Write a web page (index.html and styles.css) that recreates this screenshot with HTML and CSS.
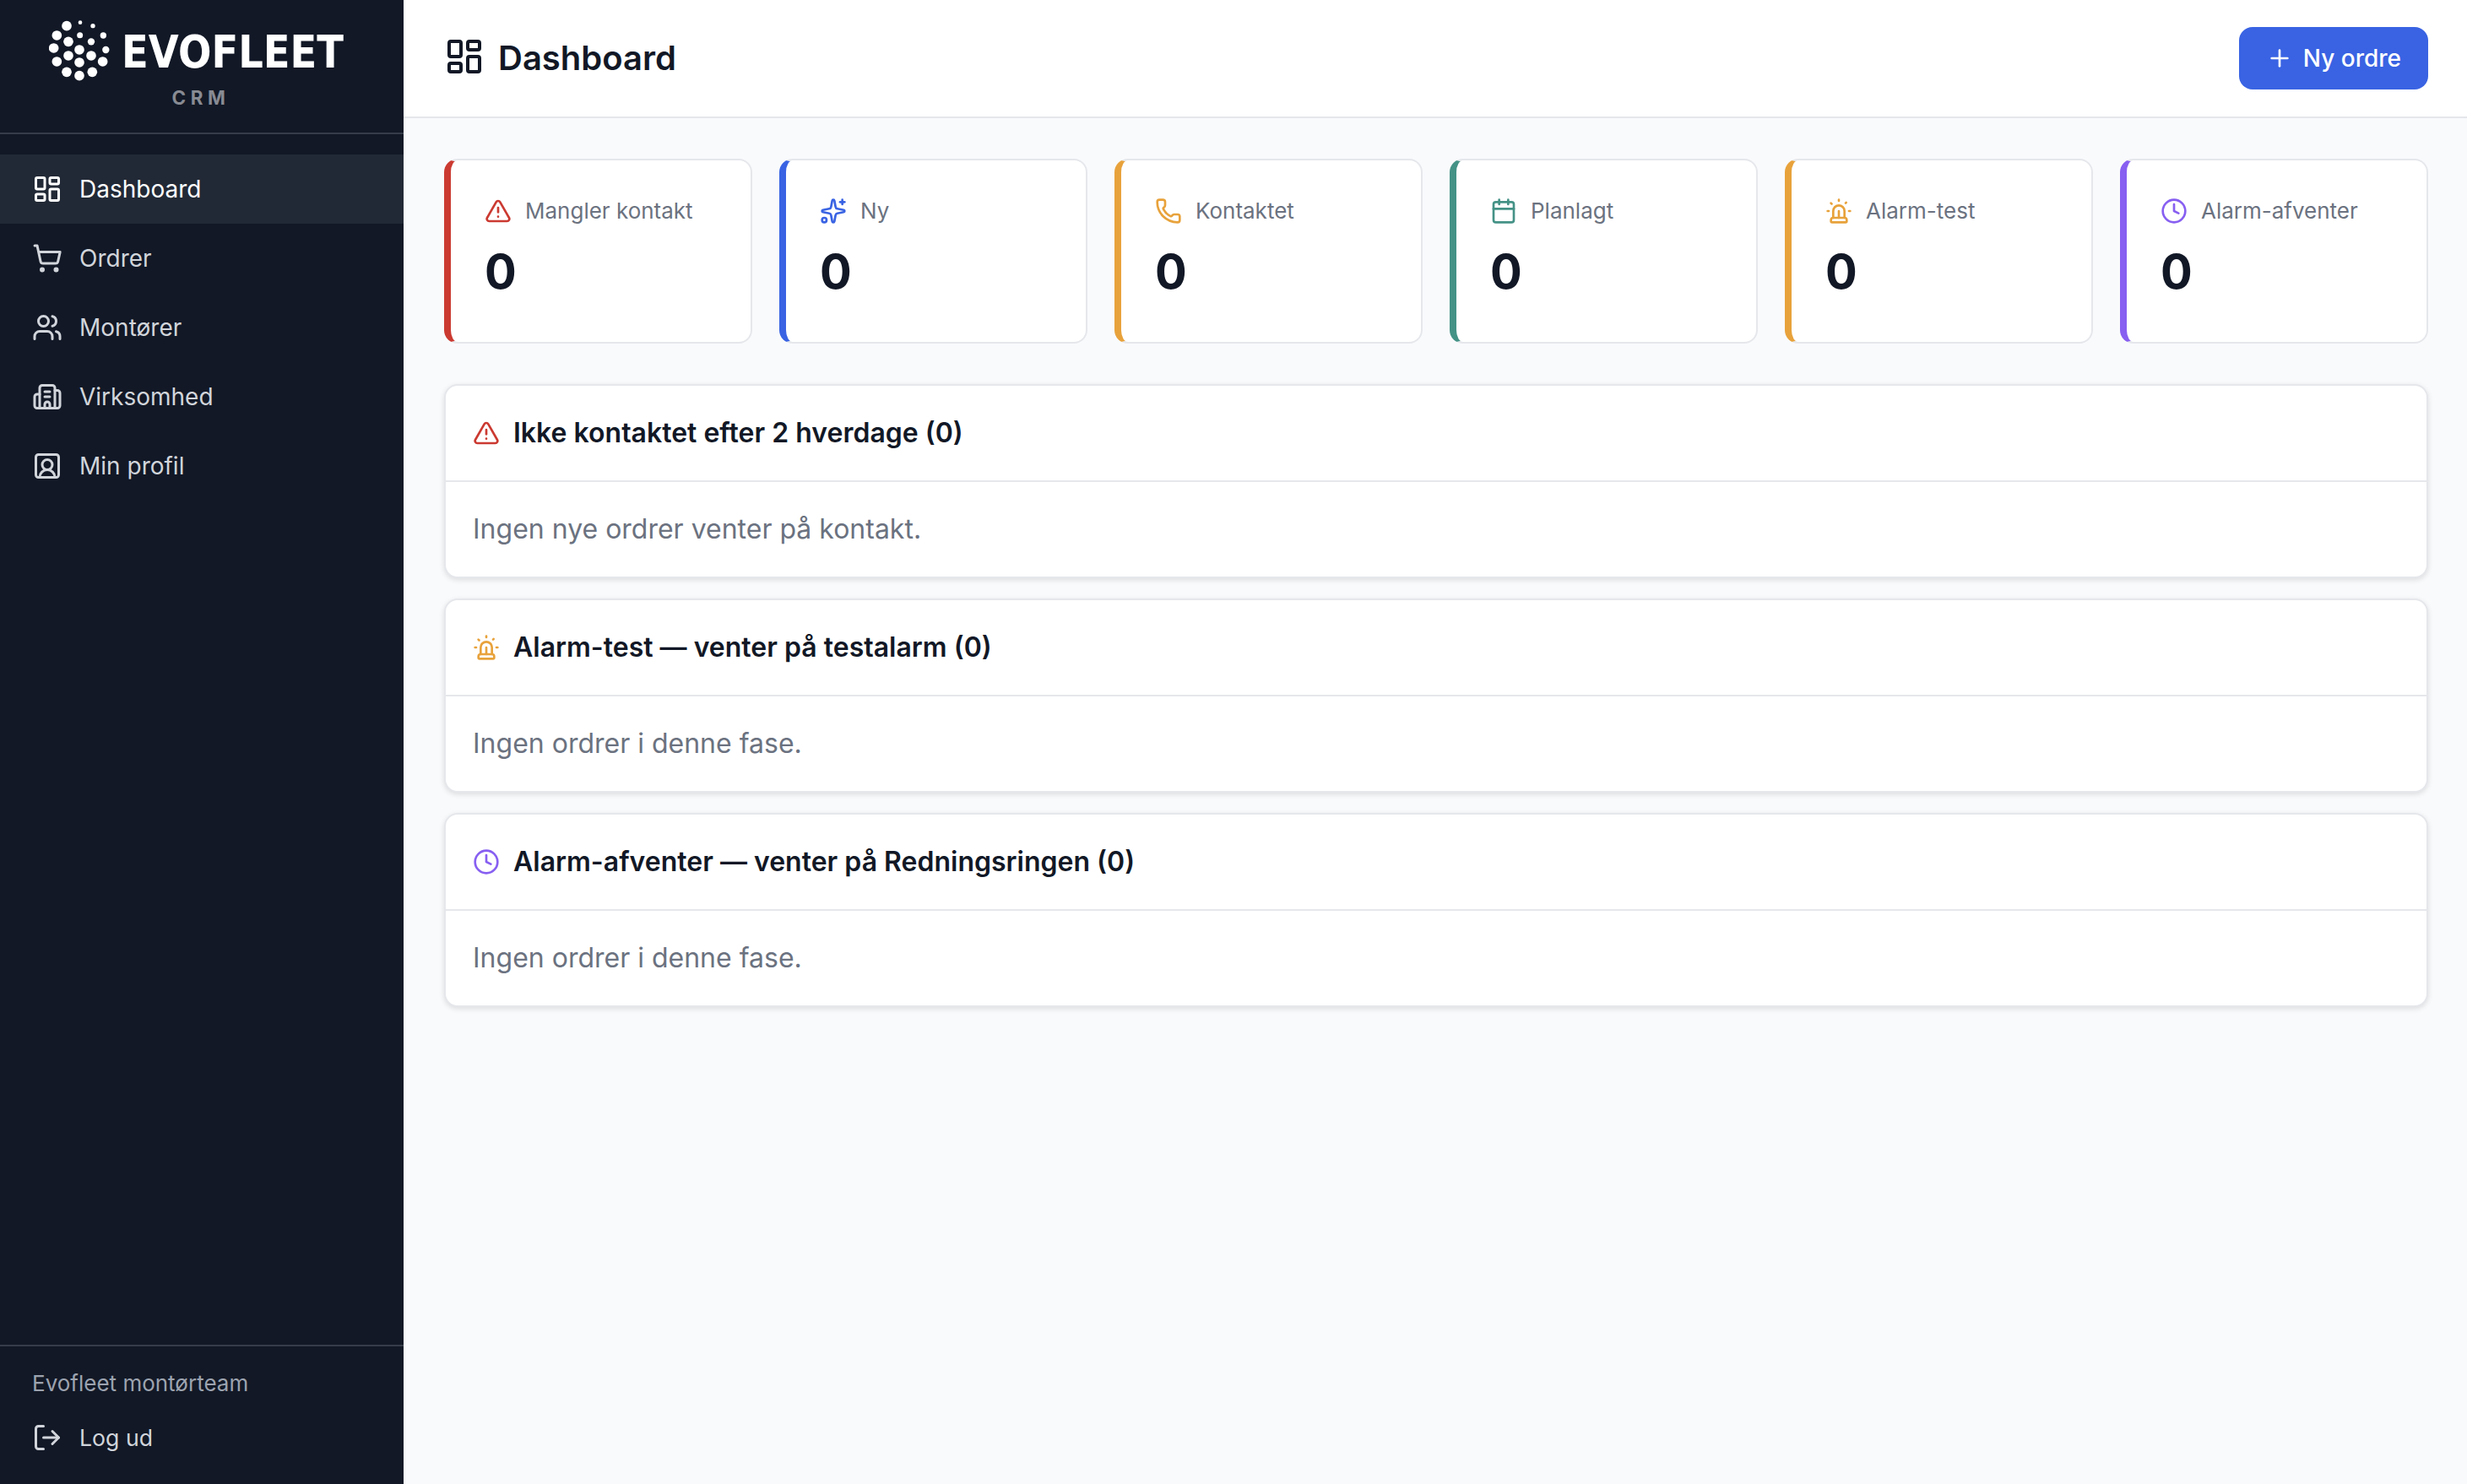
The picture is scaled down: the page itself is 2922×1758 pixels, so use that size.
FILE: index.html
```
<!DOCTYPE html>
<html lang="da">
  <head>
    <meta charset="UTF-8" />
    <meta name="viewport" content="width=device-width, initial-scale=1.0" />
    <title>Dashboard - Evofleet CRM</title>
    <link rel="stylesheet" href="styles.css">
  </head>
  <body>
    <!-- icon sprite -->
    <svg class="sprite" aria-hidden="true">
      <symbol id="i-dashboard" viewBox="0 0 24 24">
        <rect width="7" height="9" x="3" y="3" rx="1" />
        <rect width="7" height="5" x="14" y="3" rx="1" />
        <rect width="7" height="9" x="14" y="12" rx="1" />
        <rect width="7" height="5" x="3" y="16" rx="1" />
      </symbol>
      <symbol id="i-cart" viewBox="0 0 24 24">
        <circle cx="8" cy="21" r="1" />
        <circle cx="19" cy="21" r="1" />
        <path d="M2.05 2.05h2l2.66 12.42a2 2 0 0 0 2 1.58h9.78a2 2 0 0 0 1.95-1.57l1.65-7.43H5.12" />
      </symbol>
      <symbol id="i-users" viewBox="0 0 24 24">
        <path d="M16 21v-2a4 4 0 0 0-4-4H6a4 4 0 0 0-4 4v2" />
        <path d="M16 3.128a4 4 0 0 1 0 7.744" />
        <path d="M22 21v-2a4 4 0 0 0-3-3.87" />
        <circle cx="9" cy="7" r="4" />
      </symbol>
      <symbol id="i-building" viewBox="0 0 24 24">
        <path d="M10 12h4" />
        <path d="M10 8h4" />
        <path d="M14 21v-3a2 2 0 0 0-4 0v3" />
        <path d="M6 10H4a2 2 0 0 0-2 2v7a2 2 0 0 0 2 2h16a2 2 0 0 0 2-2V9a2 2 0 0 0-2-2h-2" />
        <path d="M6 21V5a2 2 0 0 1 2-2h8a2 2 0 0 1 2 2v16" />
      </symbol>
      <symbol id="i-profile" viewBox="0 0 24 24">
        <path d="M18 21a6 6 0 0 0-12 0" />
        <circle cx="12" cy="11" r="4" />
        <rect width="18" height="18" x="3" y="3" rx="2" />
      </symbol>
      <symbol id="i-logout" viewBox="0 0 24 24">
        <path d="m16 17 5-5-5-5" />
        <path d="M21 12H9" />
        <path d="M9 21H5a2 2 0 0 1-2-2V5a2 2 0 0 1 2-2h4" />
      </symbol>
      <symbol id="i-plus" viewBox="0 0 24 24">
        <path d="M5 12h14" />
        <path d="M12 5v14" />
      </symbol>
      <symbol id="i-alert" viewBox="0 0 24 24">
        <path d="m21.73 18-8-14a2 2 0 0 0-3.48 0l-8 14A2 2 0 0 0 4 21h16a2 2 0 0 0 1.73-3" />
        <path d="M12 9v4" />
        <path d="M12 17h.01" />
      </symbol>
      <symbol id="i-sparkles" viewBox="0 0 24 24">
        <path d="M11.017 2.814a1 1 0 0 1 1.966 0l1.051 5.558a2 2 0 0 0 1.594 1.594l5.558 1.051a1 1 0 0 1 0 1.966l-5.558 1.051a2 2 0 0 0-1.594 1.594l-1.051 5.558a1 1 0 0 1-1.966 0l-1.051-5.558a2 2 0 0 0-1.594-1.594l-5.558-1.051a1 1 0 0 1 0-1.966l5.558-1.051a2 2 0 0 0 1.594-1.594z" />
        <path d="M20 2v4" />
        <path d="M22 4h-4" />
        <circle cx="4" cy="20" r="2" />
      </symbol>
      <symbol id="i-phone" viewBox="0 0 24 24">
        <path d="M13.832 16.568a1 1 0 0 0 1.213-.303l.355-.465A2 2 0 0 1 17 15h3a2 2 0 0 1 2 2v3a2 2 0 0 1-2 2A18 18 0 0 1 2 4a2 2 0 0 1 2-2h3a2 2 0 0 1 2 2v3a2 2 0 0 1-.8 1.6l-.468.351a1 1 0 0 0-.292 1.233 14 14 0 0 0 6.392 6.384" />
      </symbol>
      <symbol id="i-calendar" viewBox="0 0 24 24">
        <path d="M8 2v4" />
        <path d="M16 2v4" />
        <rect width="18" height="18" x="3" y="4" rx="2" />
        <path d="M3 10h18" />
      </symbol>
      <symbol id="i-siren" viewBox="0 0 24 24">
        <path d="M7 18v-6a5 5 0 1 1 10 0v6" />
        <path d="M5 21a1 1 0 0 0 1 1h12a1 1 0 0 0 1-1v-1a2 2 0 0 0-2-2H7a2 2 0 0 0-2 2z" />
        <path d="M21 12h1" />
        <path d="M18.5 4.5 18 5" />
        <path d="M2 12h1" />
        <path d="M12 2v1" />
        <path d="m4.929 4.929.707.707" />
        <path d="M12 12v6" />
      </symbol>
      <symbol id="i-clock" viewBox="0 0 24 24">
        <circle cx="12" cy="12" r="10" />
        <path d="M12 6v6l4 2" />
      </symbol>
    </svg>

    <aside class="sidebar">
      <div class="brand">
        <svg class="logo" viewBox="0 -8 360 80" role="img" aria-label="Evofleet">
          <g transform="scale(.3333) translate(-174 -72)">
            <circle cx="237" cy="92" r="17.5" />
            <circle cx="285" cy="80" r="7" />
            <circle cx="330" cy="92" r="8" />
            <circle cx="202" cy="126" r="17.5" />
            <circle cx="284" cy="125.5" r="10.5" />
            <circle cx="367" cy="126" r="11" />
            <circle cx="243" cy="148" r="17.5" />
            <circle cx="324" cy="148" r="12.5" />
            <circle cx="191" cy="171" r="17.5" />
            <circle cx="282" cy="177" r="17.5" />
            <circle cx="376" cy="177" r="12.5" />
            <circle cx="243" cy="198" r="17.5" />
            <circle cx="324" cy="198" r="17.5" />
            <circle cx="202" cy="219" r="17.5" />
            <circle cx="282" cy="222" r="17.5" />
            <circle cx="365" cy="219" r="17.5" />
            <circle cx="237" cy="256" r="17.5" />
            <circle cx="328" cy="256" r="17.5" />
            <circle cx="282" cy="269" r="17.5" />
          </g>
          <text class="logo-text" x="86" y="56" textLength="263" lengthAdjust="spacingAndGlyphs">EVOFLEET</text>
        </svg>
        <span class="brand-sub">CRM</span>
      </div>
      <nav class="nav">
        <a class="nav-item active"><svg class="icon"><use href="#i-dashboard" /></svg>Dashboard</a>
        <a class="nav-item"><svg class="icon"><use href="#i-cart" /></svg>Ordrer</a>
        <a class="nav-item"><svg class="icon"><use href="#i-users" /></svg>Montører</a>
        <a class="nav-item"><svg class="icon"><use href="#i-building" /></svg>Virksomhed</a>
        <a class="nav-item"><svg class="icon"><use href="#i-profile" /></svg>Min profil</a>
      </nav>
      <div class="sidebar-footer">
        <div class="user-name">Evofleet montørteam</div>
        <a class="logout"><svg class="icon"><use href="#i-logout" /></svg>Log ud</a>
      </div>
    </aside>

    <main class="main">
      <header class="topbar">
        <h1><svg class="icon"><use href="#i-dashboard" /></svg>Dashboard</h1>
        <button class="btn"><svg class="icon"><use href="#i-plus" /></svg>Ny ordre</button>
      </header>

      <div class="content">
        <div class="stats">
          <div class="stat red">
            <div class="stat-label"><svg class="icon"><use href="#i-alert" /></svg>Mangler kontakt</div>
            <div class="stat-value">0</div>
          </div>
          <div class="stat blue">
            <div class="stat-label"><svg class="icon"><use href="#i-sparkles" /></svg>Ny</div>
            <div class="stat-value">0</div>
          </div>
          <div class="stat orange">
            <div class="stat-label"><svg class="icon"><use href="#i-phone" /></svg>Kontaktet</div>
            <div class="stat-value">0</div>
          </div>
          <div class="stat green">
            <div class="stat-label"><svg class="icon"><use href="#i-calendar" /></svg>Planlagt</div>
            <div class="stat-value">0</div>
          </div>
          <div class="stat orange">
            <div class="stat-label"><svg class="icon"><use href="#i-siren" /></svg>Alarm-test</div>
            <div class="stat-value">0</div>
          </div>
          <div class="stat purple">
            <div class="stat-label"><svg class="icon"><use href="#i-clock" /></svg>Alarm-afventer</div>
            <div class="stat-value">0</div>
          </div>
        </div>

        <div class="cards">
          <section class="card red">
            <h2><svg class="icon"><use href="#i-alert" /></svg>Ikke kontaktet efter 2 hverdage (0)</h2>
            <p>Ingen nye ordrer venter på kontakt.</p>
          </section>
          <section class="card orange">
            <h2><svg class="icon"><use href="#i-siren" /></svg>Alarm-test — venter på testalarm (0)</h2>
            <p>Ingen ordrer i denne fase.</p>
          </section>
          <section class="card purple">
            <h2><svg class="icon"><use href="#i-clock" /></svg>Alarm-afventer — venter på Redningsringen (0)</h2>
            <p>Ingen ordrer i denne fase.</p>
          </section>
        </div>
      </div>
    </main>
  </body>
</html>
```
FILE: styles.css
```
* {
  box-sizing: border-box;
  margin: 0;
  padding: 0;
}

html {
  font-size: 32px;
}

body {
  display: flex;
  height: 100vh;
  overflow: hidden;
  background: #f9fafc;
  color: #121826;
  font-family: "Inter", "Liberation Sans", sans-serif;
  line-height: 1.5;
}

.sprite {
  display: none;
}

.icon {
  width: 32px;
  height: 32px;
  flex-shrink: 0;
  fill: none;
  stroke: currentColor;
  stroke-width: 2;
  stroke-linecap: round;
  stroke-linejoin: round;
}

/* accent colours */
.red { --accent: #cb3a31; }
.blue { --accent: #3963e3; }
.orange { --accent: #e8a23b; }
.green { --accent: #449286; }
.purple { --accent: #875ff1; }

/* sidebar */
.sidebar {
  display: flex;
  flex-direction: column;
  flex-shrink: 0;
  width: 478px;
  background: #121826;
  color: #d1d5db;
}

.brand {
  display: flex;
  flex-direction: column;
  height: 159px;
  padding: 16px 0 0 58px;
  border-bottom: 2px solid #363c49;
}

.logo {
  width: 360px;
  height: 80px;
  fill: #fff;
}

.logo-text {
  font-family: "DejaVu Sans", sans-serif;
  font-size: 54px;
  font-weight: 700;
}

.brand-sub {
  width: 360px;
  margin-top: 3px;
  color: #888b93;
  font-size: 0.7rem;
  font-weight: 700;
  letter-spacing: 0.25em;
  text-align: center;
}

.nav {
  flex: 1;
  padding-top: 24px;
}

.nav-item {
  display: flex;
  align-items: center;
  gap: 20px;
  padding: 20px 38px;
  font-size: 0.875rem;
}

.nav-item.active {
  background: #222936;
  color: #fff;
}

.sidebar .icon {
  width: 36px;
  height: 36px;
}

.sidebar-footer {
  height: 165px;
  padding: 24px 38px 0;
  border-top: 2px solid #363c49;
}

.user-name {
  margin-bottom: 25px;
  color: #9ca3af;
  font-size: 0.8125rem;
}

.logout {
  display: flex;
  align-items: center;
  gap: 20px;
  font-size: 26.67px;
}

/* main */
.main {
  flex: 1;
  min-width: 0;
}

.topbar {
  display: flex;
  align-items: center;
  justify-content: space-between;
  height: 140px;
  padding: 0 46px 0 48px;
  background: #fff;
  border-bottom: 2px solid #e5e7eb;
}

h1 {
  display: flex;
  align-items: center;
  gap: 16px;
  font-size: 1.25rem;
  font-weight: 600;
}

h1 .icon {
  width: 48px;
  height: 48px;
  margin-bottom: 4px;
}

.btn {
  display: flex;
  align-items: center;
  gap: 12px;
  height: 74px;
  padding: 0 32px;
  background: #3963e3;
  color: #fff;
  border: none;
  border-radius: 16px;
  font-family: inherit;
  font-size: 0.875rem;
  font-weight: 500;
  cursor: pointer;
}

.content {
  padding: 48px 46px 48px 48px;
}

.stats {
  display: grid;
  grid-template-columns: repeat(6, 1fr);
  gap: 32px;
  margin-bottom: 48px;
}

.stat {
  height: 219px;
  padding: 40px;
  background: #fff;
  border: 2px solid #e5e7eb;
  border-left: 8px solid var(--accent);
  border-radius: 16px;
}

.stat-label {
  display: flex;
  align-items: center;
  gap: 16px;
  margin-bottom: 11px;
  color: #6b7280;
  font-size: 0.8125rem;
  white-space: nowrap;
}

.stat .icon,
.card .icon {
  color: var(--accent);
}

.stat-value {
  font-size: 1.75rem;
  font-weight: 700;
}

.cards {
  display: flex;
  flex-direction: column;
  gap: 24px;
}

.card {
  background: #fff;
  border: 2px solid #e5e7eb;
  border-radius: 16px;
  box-shadow: 0 2px 6px rgba(0, 0, 0, 0.12);
}

.card h2 {
  display: flex;
  align-items: center;
  gap: 16px;
  padding: 32px;
  border-bottom: 2px solid #e5e7eb;
  font-size: 1rem;
  font-weight: 600;
}

.card p {
  padding: 32px;
  color: #6b7280;
}
```
